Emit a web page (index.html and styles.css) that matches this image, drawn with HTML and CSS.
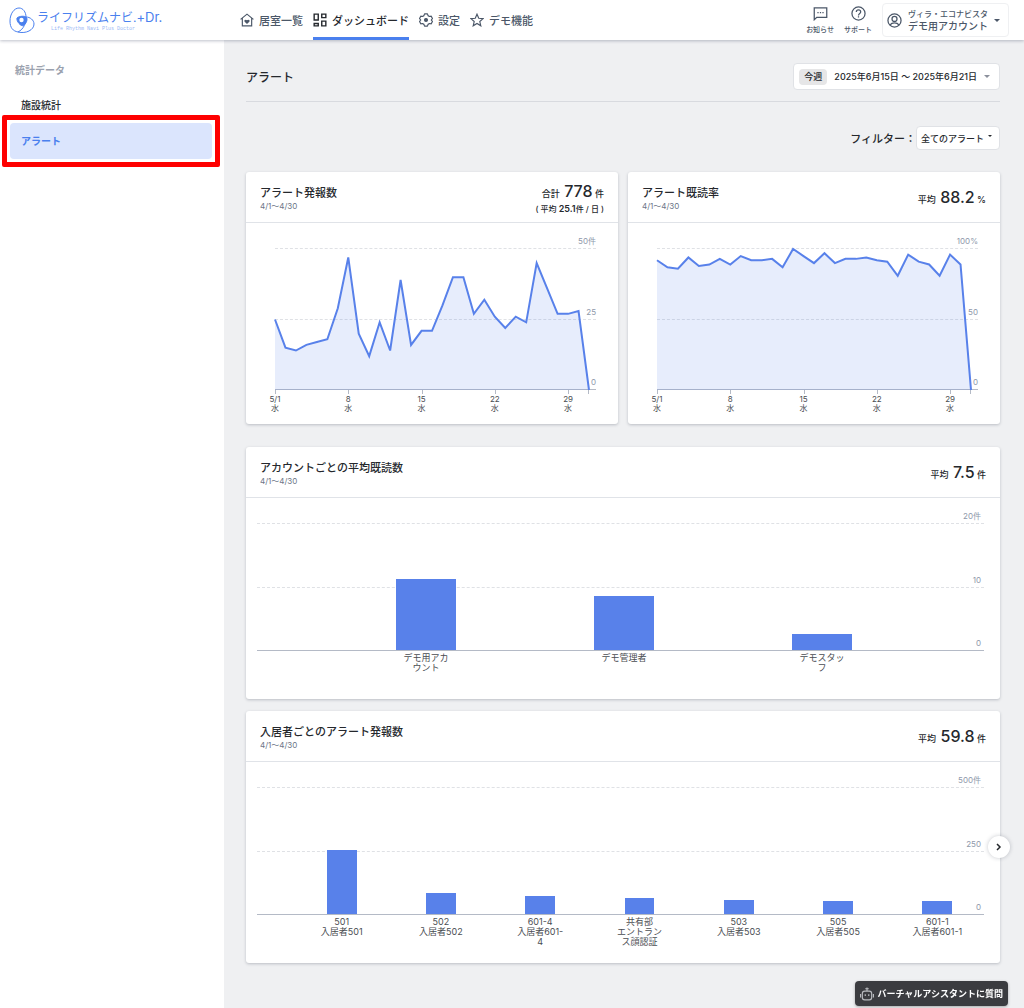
FILE: index.html
```html
<!DOCTYPE html>
<html lang="ja">
<head>
    <meta charset="UTF-8">
    <meta name="viewport" content="width=device-width, initial-scale=1.0">
    <title>アラート</title>
    <link rel="stylesheet" href="styles.css">
</head>
<body>
    <header class="header">
        <a href="#" class="logo">
            <svg class="logo-mark" viewBox="0 0 26 26" fill="none" stroke="#4a80ee">
                <path d="M10 1C5 1 1 7 1 14s3 10 8 11c8 2 16-2 16-8 0-4-4-7-8-7"/>
                <path d="M10 1c4 0 7 4 7 9 0 6-2 12-8 15"/>
                <path d="M8 11c2-2 8-2.500 9.500-.5S17 17 14.500 18.500 7 14 8 11z" fill="#4a80ee"/>
                <circle cx="12.500" cy="13" r="2.200" fill="#fff" stroke="none"/>
            </svg>
            <span class="logo-text">
                <span class="logo-name">ライフリズムナビ.<span class="logo-dr">+Dr.</span></span>
                <span class="logo-sub">Life Rhythm Navi Plus Doctor</span>
            </span>
        </a>
        <nav class="nav">
            <a href="#" class="nav-item">
                <svg class="icon" viewBox="0 0 24 24" fill="none" stroke="currentColor" stroke-width="2">
                    <path d="M1 11L12 2l11 9M4 9v13h16V9"/>
                    <path d="M12 19l-4-4c-2-3 2-5 4-2.500 2-2.500 6-.5 4 2.500z" fill="currentColor" stroke="none"/>
                </svg>
                居室一覧
            </a>
            <a href="#" class="nav-item active">
                <svg class="icon" viewBox="0 0 24 24" fill="none" stroke="currentColor" stroke-width="2.400">
                    <path d="M2 2h7v10H2zM15 2h7v6h-7zM2 18h7v4H2zM15 14h7v8h-7z"/>
                </svg>
                ダッシュボード
            </a>
            <a href="#" class="nav-item">
                <svg class="icon" viewBox="0 0 24 24" fill="none" stroke="currentColor" stroke-width="2" stroke-linejoin="round">
                    <path d="M9.500 1.500h5l1 3 2.500 1.500 3-.6 2 4.100-2 2.500 2 2.500-2 4.100-3-.6-2.500 1.500-1 3h-5l-1-3L6 18l-3 .6-2-4.100L3 12 1 9.500l2-4.100 3 .6 2.500-1.500z"/>
                    <circle cx="12" cy="12" r="2.500" fill="currentColor"/>
                </svg>
                設定
            </a>
            <a href="#" class="nav-item">
                <svg class="icon" viewBox="0 0 24 24" fill="none" stroke="currentColor" stroke-width="2">
                    <path d="M12 2l3 7 7.500.6-5.700 5 1.700 7.400-6.500-4-6.500 4 1.700-7.400-5.700-5L9 9z"/>
                </svg>
                デモ機能
            </a>
        </nav>
        <div class="header-right">
            <a href="#" class="header-link">
                <svg class="icon-lg" viewBox="0 0 24 24" fill="none" stroke="currentColor" stroke-width="2">
                    <path d="M2 22V3h20v15H6z"/>
                    <path d="M7 10.500h2M11 10.500h2M15 10.500h2"/>
                </svg>
                お知らせ
            </a>
            <a href="#" class="header-link">
                <svg class="icon-lg" viewBox="0 0 24 24" fill="none" stroke="currentColor" stroke-width="2">
                    <circle cx="12" cy="12" r="10.500"/>
                    <path d="M8.500 9.500c0-4.500 7-4.500 7 0 0 2.500-3.500 2.500-3.500 5.500M12 16.500v2"/>
                </svg>
                サポート
            </a>
            <button type="button" class="account">
                <svg class="icon-lg" viewBox="0 0 24 24" fill="none" stroke="currentColor" stroke-width="2">
                    <circle cx="12" cy="12" r="10.500"/>
                    <circle cx="12" cy="9.500" r="4"/>
                    <path d="M5 19c3-4.500 11-4.500 14 0"/>
                </svg>
                <span class="account-text">
                    <span class="account-org">ヴィラ・エコナビスタ</span>
                    <span class="account-name">デモ用アカウント</span>
                </span>
                <span class="caret"></span>
            </button>
        </div>
    </header>

    <div class="layout">
        <aside class="sidebar">
            <h2>統計データ</h2>
            <a href="#" class="side-item">施設統計</a>
            <a href="#" class="side-item current">アラート</a>
        </aside>

        <main class="main">
            <div class="page-head">
                <h1>アラート</h1>
                <button type="button" class="period">
                    <span class="period-badge">今週</span>
                    2025年6月15日 ～ 2025年6月21日
                    <span class="caret small"></span>
                </button>
            </div>

            <div class="filter">
                <label for="filter">フィルター：</label>
                <div class="select-box">
                    <select id="filter">
                        <option>全てのアラート</option>
                    </select>
                    <span class="caret tiny"></span>
                </div>
            </div>

            <div class="card-row">
                <section class="card">
                    <div class="card-head">
                        <div>
                            <h3>アラート発報数</h3>
                            <p class="range">4/1〜4/30</p>
                        </div>
                        <div class="total">
                            <p>合計 <strong>778</strong> 件</p>
                            <p class="total-sub">( 平均 <b>25.1</b>件 / 日 )</p>
                        </div>
                    </div>
                    <div class="line-chart">
                        <div class="plot">
                            <div class="ticks"><span>50件</span><span>25</span><span>0</span></div>
                            <svg class="line" viewBox="0 0 30 50" preserveAspectRatio="none">
                                <polygon points="0,50 0,25 1,35 2,36 3,34 4,33 5,32 6,21 7,3 8,30 9,38 10,26 11,36 12,11 13,34 14,29 15,29 16,20 17,10 18,10 19,23 20,18 21,24 22,28 23,24 24,26 25,5 26,14 27,23 28,23 29,22 30,50"/>
                                <polyline points="0,25 1,35 2,36 3,34 4,33 5,32 6,21 7,3 8,30 9,38 10,26 11,36 12,11 13,34 14,29 15,29 16,20 17,10 18,10 19,23 20,18 21,24 22,28 23,24 24,26 25,5 26,14 27,23 28,23 29,22 30,50"/>
                            </svg>
                        </div>
                        <div class="days">
                            <div><span>5/1<br>水</span></div>
                            <div><span>8<br>水</span></div>
                            <div><span>15<br>水</span></div>
                            <div><span>22<br>水</span></div>
                            <div><span>29<br>水</span></div>
                        </div>
                    </div>
                </section>

                <section class="card">
                    <div class="card-head">
                        <div>
                            <h3>アラート既読率</h3>
                            <p class="range">4/1〜4/30</p>
                        </div>
                        <div class="total">
                            <p>平均 <strong>88.2</strong> %</p>
                        </div>
                    </div>
                    <div class="line-chart">
                        <div class="plot">
                            <div class="ticks"><span>100%</span><span>50</span><span>0</span></div>
                            <svg class="line" viewBox="0 0 30 100" preserveAspectRatio="none">
                                <polygon points="0,100 0,8 1,13 2,14 3,6 4,12 5,11 6,7 7,11 8,5 9,8 10,8 11,7 12,13 13,0 14,5 15,10 16,3 17,10 18,7 19,7 20,6 21,8 22,9 23,19 24,4 25,9 26,11 27,19 28,4 29,11 30,100"/>
                                <polyline points="0,8 1,13 2,14 3,6 4,12 5,11 6,7 7,11 8,5 9,8 10,8 11,7 12,13 13,0 14,5 15,10 16,3 17,10 18,7 19,7 20,6 21,8 22,9 23,19 24,4 25,9 26,11 27,19 28,4 29,11 30,100"/>
                            </svg>
                        </div>
                        <div class="days">
                            <div><span>5/1<br>水</span></div>
                            <div><span>8<br>水</span></div>
                            <div><span>15<br>水</span></div>
                            <div><span>22<br>水</span></div>
                            <div><span>29<br>水</span></div>
                        </div>
                    </div>
                </section>
            </div>

            <section class="card">
                <div class="card-head">
                    <div>
                        <h3>アカウントごとの平均既読数</h3>
                        <p class="range">4/1〜4/30</p>
                    </div>
                    <div class="total">
                        <p>平均 <strong>7.5</strong> 件</p>
                    </div>
                </div>
                <div class="bar-chart accounts">
                    <div class="plot">
                        <div class="ticks"><span>20件</span><span>10</span><span>0</span></div>
                        <div class="bars">
                            <div><i style="height: 56%"></i></div>
                            <div><i style="height: 43%"></i></div>
                            <div><i style="height: 13%"></i></div>
                        </div>
                    </div>
                    <div class="names">
                        <span>デモ用アカ<br>ウント</span>
                        <span>デモ管理者</span>
                        <span>デモスタッ<br>フ</span>
                    </div>
                </div>
            </section>

            <section class="card">
                <div class="card-head">
                    <div>
                        <h3>入居者ごとのアラート発報数</h3>
                        <p class="range">4/1〜4/30</p>
                    </div>
                    <div class="total">
                        <p>平均 <strong>59.8</strong> 件</p>
                    </div>
                </div>
                <div class="bar-chart residents">
                    <div class="plot">
                        <div class="ticks"><span>500件</span><span>250</span><span>0</span></div>
                        <div class="bars">
                            <div><i style="height: 51%"></i></div>
                            <div><i style="height: 17%"></i></div>
                            <div><i style="height: 14%"></i></div>
                            <div><i style="height: 13%"></i></div>
                            <div><i style="height: 11%"></i></div>
                            <div><i style="height: 10%"></i></div>
                            <div><i style="height: 10%"></i></div>
                        </div>
                    </div>
                    <div class="names">
                        <span>501<br>入居者501</span>
                        <span>502<br>入居者502</span>
                        <span>601-4<br>入居者601-<br>4</span>
                        <span>共有部<br>エントラン<br>ス顔認証</span>
                        <span>503<br>入居者503</span>
                        <span>505<br>入居者505</span>
                        <span>601-1<br>入居者601-1</span>
                    </div>
                </div>
                <button type="button" class="next" aria-label="次へ">
                    <svg viewBox="0 0 8 8" fill="none" stroke="currentColor" stroke-width="1.500"><path d="M2 1l3 3-3 3"/></svg>
                </button>
            </section>
        </main>
    </div>

    <button type="button" class="assistant">
        <svg class="icon" viewBox="0 0 24 24" fill="none" stroke="currentColor" stroke-width="2">
            <rect x="4" y="7" width="16" height="15" rx="4"/>
            <path d="M12 7V1M9 3h6M1 12v6M23 12v6"/>
            <path d="M8 14h2M14 14h2" stroke-width="3"/>
        </svg>
        バーチャルアシスタントに質問
    </button>
</body>
</html>
```

FILE: styles.css
```css
* {
    margin: 0;
    padding: 0;
    box-sizing: border-box;
}

body {
    display: flex;
    flex-direction: column;
    min-height: 100vh;
    background-color: #eff0f2;
    color: #25282d;
    font-family: Inter, "Noto Sans CJK JP", sans-serif;
    font-size: 9px;
}

a {
    color: inherit;
    text-decoration: none;
}

button,
select {
    font: inherit;
    color: inherit;
    background-color: #fff;
    border: 1px solid #e0e2e6;
    border-radius: 4px;
    cursor: pointer;
}

/* Header */
.header {
    display: flex;
    align-items: center;
    height: 40px;
    padding: 0 15px 0 9px;
    background-color: #fff;
    color: #4b5768;
    box-shadow: 0 1px 3px rgba(40, 50, 80, 0.3);
    z-index: 1;
}

.logo {
    display: flex;
    align-items: center;
    gap: 2px;
    width: 231px;
    color: #4a80ee;
}

.logo-mark {
    width: 26px;
    height: 26px;
}

.logo-text {
    display: flex;
    flex-direction: column;
}

.logo-name {
    font-size: 12px;
    line-height: 16px;
    white-space: nowrap;
}

.logo-dr {
    font-size: 13px;
}

.logo-sub {
    padding-left: 14px;
    font-family: "Liberation Mono", monospace;
    font-size: 5px;
    line-height: 6px;
    color: #9dbaf5;
}

.nav {
    display: flex;
    align-self: stretch;
    gap: 10px;
}

.nav-item {
    display: flex;
    align-items: center;
    gap: 5px;
    border-bottom: 3px solid transparent;
    padding-top: 3px;
    font-size: 11px;
    font-weight: 500;
    white-space: nowrap;
}

.nav-item.active {
    color: #25282d;
    border-bottom-color: #4a80ee;
}

.icon {
    width: 14px;
    height: 14px;
}

.icon-lg {
    width: 15px;
    height: 15px;
}

.header-right {
    display: flex;
    align-items: center;
    gap: 10px;
    margin-left: auto;
}

.header-link {
    display: flex;
    flex-direction: column;
    align-items: center;
    gap: 4px;
    font-size: 7px;
    line-height: 9px;
    font-weight: 500;
}

.account {
    display: flex;
    align-items: center;
    gap: 6px;
    height: 34px;
    padding: 0 8px 0 4px;
    border-color: #eff0f2;
}

.account-text {
    display: flex;
    flex-direction: column;
    text-align: left;
    line-height: 12px;
    font-weight: 500;
}

.account-org {
    font-size: 8px;
}

.account-name {
    font-size: 10px;
}

.caret {
    border: 3px solid transparent;
    border-top-color: currentColor;
    border-bottom: 0;
}

.caret.small {
    color: #8b909c;
}

/* Layout */
.layout {
    display: flex;
    flex: 1;
}

.sidebar {
    width: 224px;
    padding: 20px 12px 0 10px;
    background-color: #fff;
}

.sidebar h2 {
    padding-left: 5px;
    margin-bottom: 7px;
    font-size: 10px;
    line-height: 20px;
    color: #9aa1ae;
}

.side-item {
    display: block;
    position: relative;
    padding-left: 11px;
    border-radius: 4px;
    font-size: 10px;
    line-height: 36px;
    font-weight: 500;
}

.side-item.current {
    background-color: #dbe5fd;
    color: #4a80ee;
    font-weight: 700;
}

/* Red frame over the current entry */
.side-item.current::after {
    content: "";
    position: absolute;
    inset: -8px;
    border: 5px solid #fe0000;
    border-radius: 2px;
}

.main {
    flex: 1;
    min-width: 0;
    padding: 23px 24px 45px 22px;
}

.page-head {
    display: flex;
    justify-content: space-between;
    align-items: center;
    padding-bottom: 11px;
    border-bottom: 1px solid #d8dadf;
}

.page-head h1 {
    font-size: 12px;
    font-weight: 500;
}

.period {
    display: flex;
    align-items: center;
    gap: 7px;
    height: 27px;
    padding: 0 9px 0 5px;
    font-weight: 500;
}

.period-badge {
    padding: 0 5px;
    border-radius: 4px;
    background-color: #e6e6e7;
    line-height: 16px;
}

.filter {
    display: flex;
    justify-content: flex-end;
    align-items: center;
    margin: 24px 0 22px;
    font-size: 11px;
    font-weight: 500;
}

.select-box {
    display: grid;
    align-items: center;
}

.select-box > * {
    grid-area: 1 / 1;
}

.select-box select {
    appearance: none;
    height: 24px;
    padding: 0 14px 0 4px;
    font-size: 9px;
}

.caret.tiny {
    justify-self: end;
    margin: 0 8px 4px 0;
    border-width: 2px;
    border-bottom: 0;
    pointer-events: none;
}

/* Cards */
.card-row {
    display: grid;
    grid-template-columns: 1fr 1fr;
    gap: 10px;
    margin-bottom: 23px;
}

.card {
    position: relative;
    background-color: #fff;
    border-radius: 3px;
    box-shadow: 0 1px 3px rgba(30, 40, 60, 0.25);
}

.card + .card {
    margin-top: 12px;
}

.card-row .card + .card {
    margin-top: 0;
}

.card-head {
    display: flex;
    justify-content: space-between;
    align-items: center;
    height: 51px;
    padding: 2px 14px 0;
    border-bottom: 1px solid #e0e3e8;
}

.card-head h3 {
    font-size: 11px;
    line-height: 16px;
    font-weight: 500;
}

.range {
    font-size: 8px;
    line-height: 10px;
    color: #6b7587;
}

.total {
    text-align: right;
    font-weight: 500;
    line-height: 18px;
}

.total strong {
    margin-left: 2px;
    font-size: 16px;
    font-weight: 500;
}

.total-sub {
    font-size: 8px;
    line-height: 12px;
}

.total-sub b {
    font-size: 9px;
    font-weight: 600;
}

/* Charts */
.plot {
    display: grid;
}

.plot > * {
    grid-area: 1 / 1;
}

.ticks {
    display: flex;
    flex-direction: column;
    text-align: right;
    font-size: 8px;
    line-height: 13px;
    color: #8e98aa;
}

.ticks span {
    display: flex;
    flex: 1;
    justify-content: flex-end;
    align-items: flex-end;
    border-bottom: 1px dashed #dfe1e5;
}

.ticks span:first-child {
    flex: 0 0 20px;
}

.ticks span:last-child {
    border-bottom: 1px solid #b4bac6;
}

.line-chart {
    height: 201px;
    padding: 6px 22px 0 29px;
}

.line-chart .plot {
    height: 161px;
}

.line {
    width: calc(100% - 7px);
    height: 141px;
    margin-top: 20px;
    overflow: visible;
}

.line polygon {
    fill: rgba(88, 129, 234, 0.14);
}

.line polyline {
    fill: none;
    stroke: #5881ea;
    stroke-width: 2px;
    vector-effect: non-scaling-stroke;
}

.days {
    display: grid;
    grid-template-columns: 7fr 7fr 7fr 7fr 2fr;
    margin-right: 7px;
    font-size: 8px;
    line-height: 9px;
    text-align: center;
    color: #4a4d52;
}

.days div {
    height: 4px;
    min-width: 0;
    border-left: 1px solid #b4bac6;
}

.days div:last-child {
    border-right: 1px solid #b4bac6;
}

.days span {
    display: block;
    width: 30px;
    margin-left: -16px;
    padding-top: 5px;
}

.bar-chart {
    height: 201px;
    padding: 6px 16px 0 11px;
}

.bar-chart .plot {
    height: 147px;
}

.bar-chart .ticks span {
    padding-right: 3px;
}

.bars,
.names {
    display: grid;
    grid-auto-flow: column;
    grid-auto-columns: 1fr;
}

.bars {
    height: 127px;
    margin-top: 20px;
    padding-bottom: 1px;
}

.bars div {
    display: flex;
    justify-content: center;
    align-items: flex-end;
}

.bars i {
    width: 30%;
    background-color: #5881ea;
}

.names {
    padding-top: 2px;
    line-height: 10px;
    text-align: center;
    color: #4a4d52;
}

.accounts .bars,
.accounts .names {
    margin-left: 70px;
    margin-right: 63px;
}

.residents .bars,
.residents .names {
    margin-left: 35px;
    margin-right: -3px;
}

.next {
    position: absolute;
    right: -10px;
    bottom: 105px;
    display: flex;
    justify-content: center;
    align-items: center;
    width: 22px;
    height: 22px;
    border: none;
    border-radius: 50%;
    box-shadow: 0 0 4px rgba(30, 40, 60, 0.25);
}

.next svg {
    width: 8px;
    height: 8px;
}

.assistant {
    position: fixed;
    right: 16px;
    bottom: 2px;
    display: flex;
    align-items: center;
    gap: 3px;
    height: 25px;
    padding: 0 5px;
    border: none;
    background-color: #3b3c40;
    color: #fff;
    font-weight: 700;
    box-shadow: 0 1px 3px rgba(0, 0, 0, 0.3);
}

.assistant .icon {
    color: #b9bbbf;
}
```
